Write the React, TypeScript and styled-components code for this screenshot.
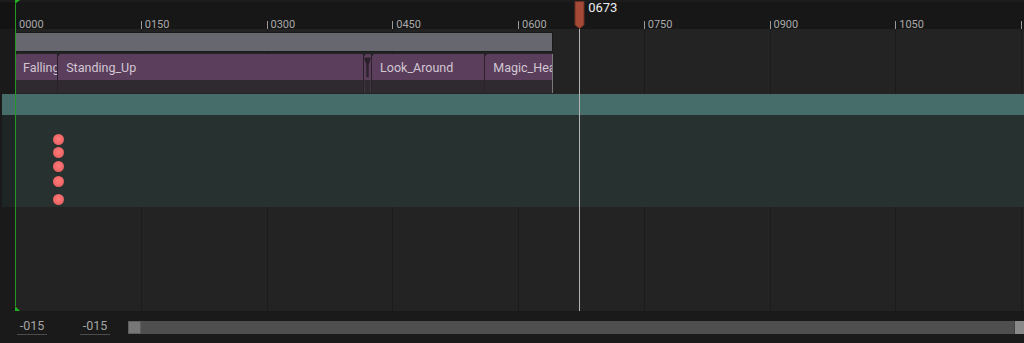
import React from 'react';
import styled, {createGlobalStyle} from 'styled-components';

// timeline scale: frame 0 sits at x=15, frame 1200 at x=1021
const GUTTER = 15;
const PX_PER_FRAME = (1021 - GUTTER) / 1200;
const toX = (frame: number) => frame * PX_PER_FRAME;

const TICKS = [0, 150, 300, 450, 600, 750, 900, 1050, 1200];
const PLAYHEAD = 673;

interface ClipData {
  name: string;
  start: number;
  end: number;
  transition?: boolean;
}

const CLIPS: ClipData[] = [
  {name: 'Falling', start: 0, end: 51.5},
  {name: 'Standing_Up', start: 51.5, end: 416.5},
  {name: '', start: 416.5, end: 426, transition: true},
  {name: 'Look_Around', start: 426, end: 561},
  {name: 'Magic_Head_Turn', start: 561, end: 642},
];

const KEYS = [24, 37, 51, 66.5, 84];

const GlobalStyle = createGlobalStyle`
  html, body {
    margin: 0;
    padding: 0;
    background: #161616;
  }
  * {
    box-sizing: border-box;
  }
`;

export default function App() {
  return (
    <>
      <GlobalStyle/>
      <Editor>
        <Ruler>
          <RulerGutter/>
          <Scale>
            {TICKS.map(f => (
              <Tick key={f} style={{left: toX(f)}}>
                {f < 1200 && <TickLabel>{String(f).padStart(4, '0')}</TickLabel>}
              </Tick>
            ))}
          </Scale>
        </Ruler>

        <Body>
          <GridLayer>
            {TICKS.slice(1).map(f => (
              <GridLine key={f} style={{left: GUTTER + toX(f)}}/>
            ))}
          </GridLayer>

          <Row $height={24}>
            <Gutter $bg="#1a1a1a"/>
            <Lane>
              <SectionBar style={{width: toX(642)}}/>
            </Lane>
          </Row>

          <Row $height={41}>
            <Gutter $bg="#1a1a1a"/>
            <ClipLane>
              {CLIPS.map((clip, i) => (
                <Clip
                  key={clip.name + i}
                  $last={i === CLIPS.length - 1}
                  style={{width: toX(clip.end - clip.start)}}
                >
                  <ClipHead>
                    {clip.transition ? <TransitionIcon/> : <ClipName>{clip.name}</ClipName>}
                  </ClipHead>
                  <ClipFoot $dotted={clip.transition}/>
                </Clip>
              ))}
            </ClipLane>
          </Row>

          <Row $height={21} $solid="#476d6a">
            <Gutter $bg="#476d6a"/>
            <Lane/>
          </Row>

          <Row $height={92} $solid="#273130">
            <Gutter $bg="#1e2625"/>
            <Lane>
              {KEYS.map(y => (
                <KeyDot key={y} style={{left: toX(52) - 5.5, top: y - 5.5}}/>
              ))}
            </Lane>
          </Row>

          <Row $grow>
            <Gutter $bg="#1a1a1a"/>
            <Lane/>
          </Row>
        </Body>

        <Footer>
          <NumberField>-015</NumberField>
          <NumberField>-015</NumberField>
          <ScrollBar>
            <ScrollThumb/>
            <ScrollTrack/>
            <ScrollCap/>
          </ScrollBar>
        </Footer>

        <StartMarker>
          <svg width="5" height="4" viewBox="0 0 5 4"><polygon points="0,0 5,0 0,4" fill="#22b022"/></svg>
          <StartLine/>
          <svg width="5" height="5" viewBox="0 0 5 5"><polygon points="0,0 0,5 5,5" fill="#22b022"/></svg>
        </StartMarker>

        <Playhead style={{left: GUTTER + toX(PLAYHEAD) - 5}}>
          <PlayheadHead>
            <svg width="11" height="28" viewBox="0 0 11 28">
              <path d="M1 0.5 H10 V24 L5.5 27.5 L1 24 Z" fill="#a44a37" stroke="#6e2e22" strokeWidth="1"/>
            </svg>
            <PlayheadLabel>{String(PLAYHEAD).padStart(4, '0')}</PlayheadLabel>
          </PlayheadHead>
          <PlayheadLine/>
        </Playhead>
      </Editor>
    </>
  );
}

function TransitionIcon() {
  return (
    <svg width="9" height="25" viewBox="0 0 9 25">
      <path d="M0 0 H9 L6 9 V25 H3 V9 Z" fill="#2a1f2b"/>
      <path d="M3.5 9 V25 M5.5 9 V25" stroke="#3d2c3e" strokeWidth="1"/>
    </svg>
  );
}

const Editor = styled.div`
  position: relative;
  width: 1024px;
  height: 343px;
  overflow: hidden;
  display: flex;
  flex-direction: column;
  background: #161616;
  font-family: Roboto, "Liberation Sans", sans-serif;
`;

const Ruler = styled.div`
  display: flex;
  height: 29px;
  flex: none;
  background: #171717;
  border-top: 2px solid #1c1c1c;
`;

const RulerGutter = styled.div`
  width: ${GUTTER}px;
  background: #131313;
`;

const Scale = styled.div`
  position: relative;
  flex: 1;
`;

const Tick = styled.div`
  position: absolute;
  top: 19px;
  width: 1px;
  height: 8px;
  background: #9a9a9a;
`;

const TickLabel = styled.span`
  position: absolute;
  left: 4px;
  top: -2px;
  font-size: 11px;
  line-height: 11px;
  color: #a9a9a9;
  white-space: nowrap;
`;

const Body = styled.div`
  position: relative;
  height: 282px;
  flex: none;
  display: flex;
  flex-direction: column;
  background: #232323;
`;

const GridLayer = styled.div`
  position: absolute;
  inset: 0;
  pointer-events: none;
`;

const GridLine = styled.div`
  position: absolute;
  top: 0;
  bottom: 0;
  width: 1px;
  background: #1b1b1b;
`;

const Row = styled.div<{$height?: number; $solid?: string; $grow?: boolean}>`
  position: relative;
  display: flex;
  height: ${p => p.$height ? `${p.$height}px` : 'auto'};
  flex: ${p => p.$grow ? 1 : 'none'};
  background: ${p => p.$solid || 'transparent'};
`;

const Gutter = styled.div<{$bg: string}>`
  width: ${GUTTER}px;
  flex: none;
  background: ${p => p.$bg};
  border-left: 2px solid #1a1a1a;
`;

const Lane = styled.div`
  position: relative;
  flex: 1;
`;

const SectionBar = styled.div`
  margin-top: 3px;
  height: 20px;
  background: #67676f;
  border: 1px solid #1a1a1a;
  border-left: none;
`;

const ClipLane = styled.div`
  flex: 1;
  display: flex;
  align-items: stretch;
  padding-top: 1px;
  padding-bottom: 1px;
`;

const Clip = styled.div<{$last?: boolean}>`
  position: relative;
  flex: none;
  display: flex;
  flex-direction: column;
  overflow: hidden;
  border-right: 1px solid ${p => p.$last ? '#7a7a7a' : '#2a212a'};

  &::before {
    content: '';
    position: absolute;
    left: -3px;
    top: -1px;
    border-left: 3px solid transparent;
    border-right: 3px solid transparent;
    border-top: 3px solid #1d1d1d;
  }
`;

const ClipHead = styled.div`
  height: 26px;
  display: flex;
  align-items: center;
  background: #5a3e5b;
`;

const ClipName = styled.span`
  padding-left: 8px;
  font-size: 12.5px;
  color: #d3c6d3;
  white-space: nowrap;
`;

const ClipFoot = styled.div<{$dotted?: boolean}>`
  flex: 1;
  background: #2f2930;
  border-left: ${p => p.$dotted ? '1px dotted #4a3f4a' : 'none'};
  border-right: ${p => p.$dotted ? '1px dotted #4a3f4a' : 'none'};
`;

const KeyDot = styled.div`
  position: absolute;
  width: 11px;
  height: 11px;
  border-radius: 50%;
  background: radial-gradient(circle at 50% 45%, #ff7a7a 0%, #f06868 55%, #c85454 100%);
`;

const Footer = styled.div`
  flex: 1;
  display: flex;
  align-items: center;
  padding-left: 17px;
  background: #1a1a1a;
`;

const NumberField = styled.div`
  width: 30px;
  margin-right: 33px;
  padding-bottom: 1px;
  text-align: center;
  font-size: 12.5px;
  line-height: 14px;
  color: #a4a4a4;
  border-bottom: 1px solid #4c4c4c;

  & + & {
    margin-right: 18px;
  }
`;

const ScrollBar = styled.div`
  flex: 1;
  height: 13px;
  display: flex;
  background: #4f4f4f;
`;

const ScrollThumb = styled.div`
  width: 13px;
  background: #777;
  border: 1px solid #5e5e5e;
`;

const ScrollTrack = styled.div`
  flex: 1;
`;

const ScrollCap = styled.div`
  width: 10px;
  background: #898989;
  border-left: 1px solid #444;
`;

const StartMarker = styled.div`
  position: absolute;
  left: ${GUTTER}px;
  top: 0;
  height: 311px;
  width: 5px;
  display: flex;
  flex-direction: column;
  align-items: flex-start;

  svg {
    display: block;
    flex: none;
  }
`;

const StartLine = styled.div`
  flex: 1;
  width: 1px;
  background: #259825;
`;

const Playhead = styled.div`
  position: absolute;
  top: 1px;
  height: 310px;
  display: flex;
  flex-direction: column;
  align-items: flex-start;
`;

const PlayheadHead = styled.div`
  position: relative;
  height: 28px;

  svg {
    display: block;
  }
`;

const PlayheadLabel = styled.span`
  position: absolute;
  left: 14px;
  top: 0;
  font-size: 13px;
  line-height: 14px;
  color: #ececec;
`;

const PlayheadLine = styled.div`
  flex: 1;
  width: 1px;
  margin-left: 5px;
  background: #b4b4b4;
`;
